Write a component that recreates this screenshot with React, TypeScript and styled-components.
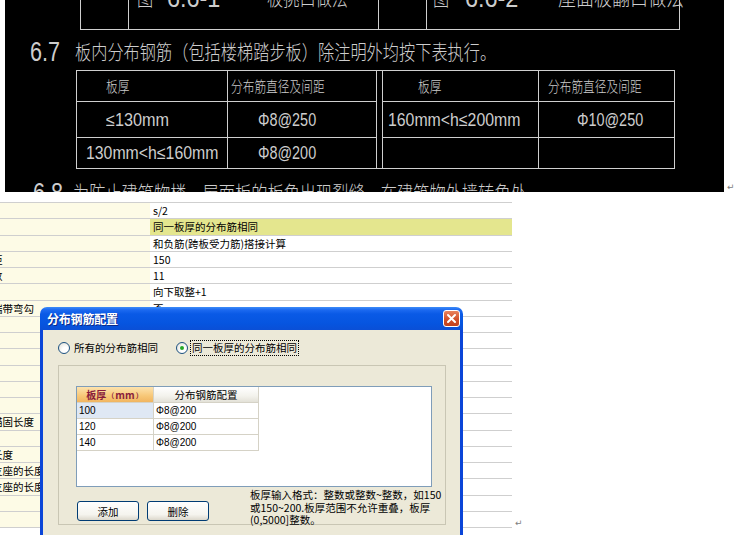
import React from "react";
import styled, { createGlobalStyle } from "styled-components";

const CJK = `"Noto Sans CJK SC", "Noto Sans", sans-serif`;
const LATIN = `"Liberation Sans", "DejaVu Sans", sans-serif`;

const GlobalStyle = createGlobalStyle`
  html, body { margin: 0; padding: 0; background: #ffffff; }
  body { width: 738px; height: 535px; overflow: hidden; font-family: ${CJK}; }
`;

const Page = styled.div`
  position: relative;
  width: 738px;
  height: 535px;
  overflow: hidden;
`;

/* ---------- CAD drawing strip ---------- */

const CadRow = styled.div`
  display: flex;
  align-items: flex-end;
  padding-left: 5px;
`;

const CadSheet = styled.div`
  width: 719px;
  height: 192px;
  background: #000;
  color: #cdcdcd;
  overflow: hidden;
`;

const ReturnMark = styled.span`
  font-family: "DejaVu Sans", sans-serif;
  font-size: 9px;
  line-height: 10px;
  color: #808080;
  margin-left: 3px;
`;

const Cad = styled.span<{ $size: number; $sx: number; $latin?: boolean; $ml?: number }>`
  display: inline-block;
  margin-left: ${(p) => p.$ml ?? 0}px;
  font-family: ${(p) => (p.$latin ? LATIN : CJK)};
  font-size: ${(p) => p.$size}px;
  font-weight: ${(p) => (p.$latin ? 400 : 300)};
  line-height: 22px;
  white-space: nowrap;
  transform: scaleX(${(p) => p.$sx});
  transform-origin: left center;
`;

const CaptionGrid = styled.div`
  display: grid;
  grid-template-columns: 48px 250px 48px 253px;
  width: max-content;
  margin: -20px 0 0 75px;
  border-left: 1px solid #cfcfcf;
`;

const CaptionCell = styled.div<{ $pad?: number }>`
  height: 50px;
  box-sizing: border-box;
  border-right: 1px solid #cfcfcf;
  border-bottom: 1px solid #cfcfcf;
  padding: 7px 0 0 ${(p) => p.$pad ?? 0}px;
  display: flex;
  align-items: flex-start;
`;

const CadLine = styled.div<{ $top: number; $pad: number }>`
  height: 28px;
  margin-top: ${(p) => p.$top}px;
  padding-left: ${(p) => p.$pad}px;
  display: flex;
  align-items: center;
  white-space: nowrap;
`;

const SpecTable = styled.div`
  display: grid;
  grid-template-columns: 151px 149px 6px 156px 136px;
  grid-template-rows: 31px 36px 31px;
  width: max-content;
  margin: 4px 0 0 71px;
  border-top: 1px solid #cfcfcf;
  border-left: 1px solid #cfcfcf;
`;

const SpecCell = styled.div<{ $pad?: number; $gap?: boolean; $last?: boolean }>`
  box-sizing: border-box;
  border-right: 1px solid #cfcfcf;
  border-bottom: ${(p) => (p.$gap && !p.$last ? "none" : "1px solid #cfcfcf")};
  padding-left: ${(p) => p.$pad ?? 0}px;
  display: flex;
  align-items: center;
`;

/* ---------- property grid ---------- */

const GridRow = styled.div`
  display: flex;
  align-items: flex-end;
  margin-top: 10px;
`;

const PropGrid = styled.div`
  width: 512px;
  border-top: 1px solid #cfcfcf;
`;

const PropRow = styled.div`
  display: flex;
  height: 16.25px;
  box-sizing: border-box;
  border-bottom: 1px solid #cfcfcf;
  font-size: 10.5px;
  line-height: 15px;
  color: #000;
  overflow: hidden;
`;

const PropLabel = styled.div`
  width: 150px;
  flex-shrink: 0;
  background: #fdfbe6;
  overflow: hidden;
  white-space: nowrap;
`;

const LabelText = styled.span`
  display: inline-block;
  margin-left: -50px;
`;

const PropValue = styled.div<{ $hl?: boolean }>`
  flex: 1;
  padding-left: 3px;
  white-space: nowrap;
  background: ${(p) => (p.$hl ? "#e4e68e" : "#ffffff")};
`;

/* ---------- dialog ---------- */

const Dialog = styled.div`
  position: absolute;
  left: 40px;
  top: 307px;
  width: 423px;
  height: 240px;
  display: flex;
  flex-direction: column;
  z-index: 2;
`;

const TitleBar = styled.div`
  height: 23px;
  flex-shrink: 0;
  box-sizing: border-box;
  border-radius: 7px 7px 0 0;
  background: linear-gradient(
    to bottom,
    #3d8cf7 0%,
    #1d6af0 12%,
    #0a5ae6 30%,
    #0655e0 70%,
    #0a4fd6 100%
  );
  display: flex;
  align-items: center;
  justify-content: space-between;
  padding: 0 3px 0 7px;
`;

const Title = styled.span`
  color: #ffffff;
  font-size: 12px;
  font-weight: 700;
  letter-spacing: -0.2px;
  text-shadow: 1px 1px 0 #0b2a8a;
`;

const CloseButton = styled.div`
  width: 17px;
  height: 17px;
  box-sizing: border-box;
  border: 1px solid #ffffff;
  border-radius: 3px;
  background: linear-gradient(to bottom, #e9845e, #d2502a 55%, #c0401c);
  display: flex;
  align-items: center;
  justify-content: center;
`;

const DialogBody = styled.div`
  flex: 1;
  background: #ece9d8;
  border-left: 3px solid #0a45d8;
  border-right: 3px solid #0a45d8;
  padding: 10px 0 0 15px;
`;

const RadioRow = styled.div`
  display: flex;
  align-items: center;
  height: 16px;
  font-size: 10.5px;
  color: #000;
`;

const RadioItem = styled.label<{ $ml?: number }>`
  display: flex;
  align-items: center;
  margin-left: ${(p) => p.$ml ?? 0}px;
`;

const Radio = styled.span<{ $checked?: boolean }>`
  position: relative;
  width: 12px;
  height: 12px;
  box-sizing: border-box;
  border: 1px solid #1c5180;
  border-radius: 50%;
  background: radial-gradient(circle at 65% 70%, #ffffff 30%, #dcdbd2 100%);
  &::after {
    content: "";
    display: ${(p) => (p.$checked ? "block" : "none")};
    position: absolute;
    left: 3px;
    top: 3px;
    width: 4px;
    height: 4px;
    border-radius: 50%;
    background: #26a826;
  }
`;

const RadioText = styled.span<{ $focus?: boolean }>`
  margin-left: 2px;
  padding: 0 1px;
  line-height: 14px;
  border: 1px dotted ${(p) => (p.$focus ? "#000" : "transparent")};
`;

const Panel = styled.div`
  margin-top: 9px;
  width: 388px;
  height: 160px;
  box-sizing: border-box;
  border: 1px solid #c9c6b4;
  padding: 20px 0 0 17px;
`;

const ListBox = styled.div`
  width: 356px;
  height: 101px;
  box-sizing: border-box;
  border: 1px solid #7f9db9;
  background: #ffffff;
`;

const ListGrid = styled.div`
  display: grid;
  grid-template-columns: 77px 105px;
  grid-auto-rows: 16px;
`;

const HeadCell = styled.div<{ $accent?: boolean }>`
  box-sizing: border-box;
  border-right: 1px solid #d5d2c6;
  border-bottom: 1px solid #d5d2c6;
  display: flex;
  align-items: center;
  justify-content: center;
  font-size: ${(p) => (p.$accent ? "10px" : "10.5px")};
  font-weight: ${(p) => (p.$accent ? 700 : 400)};
  color: ${(p) => (p.$accent ? "#8a1d3c" : "#000")};
  background: ${(p) =>
    p.$accent
      ? "linear-gradient(to bottom, #fde3ae, #f7c777 60%, #f1b560)"
      : "linear-gradient(to bottom, #ffffff, #f3f2ec 60%, #e3e1d7)"};
`;

const Unit = styled.span`
  font-size: 7px;
  margin: 0 1px;
`;

const DataCell = styled.div<{ $sel?: boolean }>`
  box-sizing: border-box;
  border-right: 1px solid #d5d2c6;
  border-bottom: 1px solid #d5d2c6;
  padding-left: 2px;
  display: flex;
  align-items: center;
  font-family: ${LATIN};
  font-size: 10px;
  color: #000;
  background: ${(p) => (p.$sel ? "#dfe8f4" : "#ffffff")};
`;

const Footer = styled.div`
  display: flex;
  align-items: flex-start;
  margin-top: 2px;
  padding-left: 1px;
`;

const XpButton = styled.button<{ $ml?: number }>`
  width: 62px;
  height: 20px;
  margin: 12px 0 0 ${(p) => p.$ml ?? 0}px;
  padding: 0;
  box-sizing: border-box;
  border: 1px solid #003c74;
  border-radius: 3px;
  background: linear-gradient(to bottom, #ffffff, #f5f4ee 70%, #dcd8cc);
  font-family: ${CJK};
  font-size: 10.5px;
  color: #000;
`;

const HelpText = styled.div`
  margin-left: 41px;
  font-size: 10.5px;
  line-height: 12.5px;
  color: #000;
  white-space: nowrap;
`;

const propRows: { label: string; value: string; hl?: boolean }[] = [
  { label: "起步距离", value: "s/2" },
  { label: "分布配置", value: "同一板厚的分布筋相同", hl: true },
  { label: "分布长度", value: "和负筋(跨板受力筋)搭接计算" },
  { label: "温度筋间距", value: "150" },
  { label: "温度筋根数", value: "11" },
  { label: "根数取整", value: "向下取整+1" },
  { label: "分布筋末端带弯勾", value: "否" },
  { label: "马凳高度", value: "" },
  { label: "马凳间距", value: "" },
  { label: "马凳根数", value: "" },
  { label: "温度搭接", value: "" },
  { label: "负筋标注", value: "" },
  { label: "负筋长度", value: "" },
  { label: "板分布筋锚固长度", value: "" },
  { label: "板筋计算", value: "" },
  { label: "板筋搭接长度", value: "" },
  { label: "负筋伸入支座的长度", value: "" },
  { label: "底筋伸入支座的长度", value: "" },
  { label: "板角加筋", value: "" },
  { label: "洞口加筋", value: "" },
];

const listRows = ["100", "120", "140"];

export default function App() {
  return (
    <Page>
      <GlobalStyle />
      <CadRow>
        <CadSheet>
          <CaptionGrid>
            <CaptionCell />
            <CaptionCell $pad={8}>
              <Cad $size={20} $sx={0.81}>图</Cad>
              <Cad $size={26} $sx={0.9} $latin $ml={10}>6.6-1</Cad>
              <Cad $size={20} $sx={0.81} $ml={41}>板挑口做法</Cad>
            </CaptionCell>
            <CaptionCell />
            <CaptionCell $pad={6}>
              <Cad $size={20} $sx={0.81}>图</Cad>
              <Cad $size={26} $sx={0.9} $latin $ml={12}>6.6-2</Cad>
              <Cad $size={20} $sx={0.9} $ml={34}>屋面板翻口做法</Cad>
            </CaptionCell>
          </CaptionGrid>

          <CadLine $top={8} $pad={25}>
            <Cad $size={27} $sx={0.8} $latin>6.7</Cad>
            <Cad $size={20} $sx={0.81} $ml={7}>
              板内分布钢筋（包括楼梯踏步板）除注明外均按下表执行。
            </Cad>
          </CadLine>

          <SpecTable>
            <SpecCell $pad={29}><Cad $size={15} $sx={0.78}>板厚</Cad></SpecCell>
            <SpecCell $pad={3}><Cad $size={15} $sx={0.78}>分布筋直径及间距</Cad></SpecCell>
            <SpecCell $gap />
            <SpecCell $pad={35}><Cad $size={15} $sx={0.78}>板厚</Cad></SpecCell>
            <SpecCell $pad={9}><Cad $size={15} $sx={0.78}>分布筋直径及间距</Cad></SpecCell>

            <SpecCell $pad={29}><Cad $size={18} $sx={0.9} $latin>≤130mm</Cad></SpecCell>
            <SpecCell $pad={30}><Cad $size={18} $sx={0.8} $latin>Φ8@250</Cad></SpecCell>
            <SpecCell $gap />
            <SpecCell $pad={5}><Cad $size={18} $sx={0.88} $latin>160mm&lt;h≤200mm</Cad></SpecCell>
            <SpecCell $pad={38}><Cad $size={18} $sx={0.8} $latin>Φ10@250</Cad></SpecCell>

            <SpecCell $pad={9}><Cad $size={18} $sx={0.88} $latin>130mm&lt;h≤160mm</Cad></SpecCell>
            <SpecCell $pad={30}><Cad $size={18} $sx={0.8} $latin>Φ8@200</Cad></SpecCell>
            <SpecCell $gap $last />
            <SpecCell />
            <SpecCell />
          </SpecTable>

          <CadLine $top={10} $pad={28}>
            <Cad $size={27} $sx={0.8} $latin>6.8</Cad>
            <Cad $size={20} $sx={0.81} $ml={2}>
              为防止建筑物楼、屋面板的板角出现裂缝，在建筑物外墙转角处
            </Cad>
          </CadLine>
        </CadSheet>
        <ReturnMark>↵</ReturnMark>
      </CadRow>

      <GridRow>
        <PropGrid>
          {propRows.map((r, i) => (
            <PropRow key={i}>
              <PropLabel>
                <LabelText>{r.label}</LabelText>
              </PropLabel>
              <PropValue $hl={r.hl}>{r.value}</PropValue>
            </PropRow>
          ))}
        </PropGrid>
        <ReturnMark>↵</ReturnMark>
      </GridRow>

      <Dialog>
        <TitleBar>
          <Title>分布钢筋配置</Title>
          <CloseButton>
            <svg width="11" height="11" viewBox="0 0 11 11">
              <path d="M2 2 L9 9 M9 2 L2 9" stroke="#ffffff" strokeWidth="2" strokeLinecap="round" />
            </svg>
          </CloseButton>
        </TitleBar>
        <DialogBody>
          <RadioRow>
            <RadioItem>
              <Radio />
              <RadioText>所有的分布筋相同</RadioText>
            </RadioItem>
            <RadioItem $ml={16}>
              <Radio $checked />
              <RadioText $focus>同一板厚的分布筋相同</RadioText>
            </RadioItem>
          </RadioRow>

          <Panel>
            <ListBox>
              <ListGrid>
                <HeadCell $accent>
                  板厚<Unit>（</Unit>mm<Unit>）</Unit>
                </HeadCell>
                <HeadCell>分布钢筋配置</HeadCell>
                {listRows.map((t, i) => (
                  <React.Fragment key={t}>
                    <DataCell $sel={i === 0}>{t}</DataCell>
                    <DataCell>Φ8@200</DataCell>
                  </React.Fragment>
                ))}
              </ListGrid>
            </ListBox>
            <Footer>
              <XpButton>添加</XpButton>
              <XpButton $ml={8}>删除</XpButton>
              <HelpText>
                板厚输入格式：整数或整数~整数，如150
                <br />
                或150~200.板厚范围不允许重叠，板厚
                <br />
                (0,5000]整数。
              </HelpText>
            </Footer>
          </Panel>
        </DialogBody>
      </Dialog>
    </Page>
  );
}
